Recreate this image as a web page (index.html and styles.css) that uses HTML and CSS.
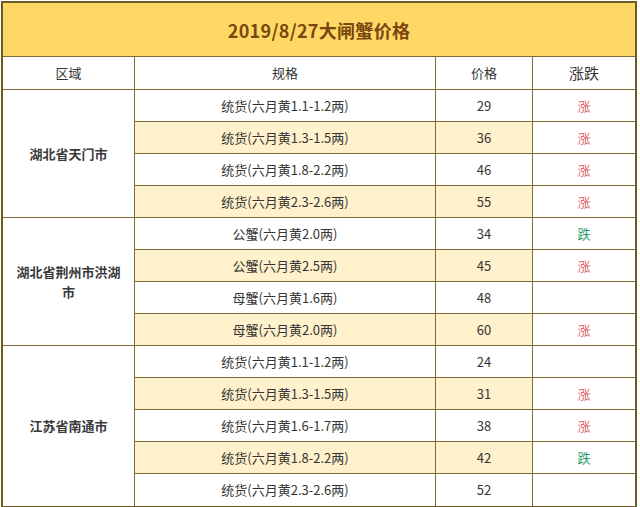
FILE: index.html
```html
<!DOCTYPE html>
<html lang="zh-CN">
<head>
<meta charset="utf-8">
<title>2019/8/27大闸蟹价格</title>
<link rel="stylesheet" href="styles.css">
</head>
<body>
<table class="price-table">
  <colgroup>
    <col class="c-region">
    <col class="c-spec">
    <col class="c-price">
    <col class="c-trend">
  </colgroup>
  <tr class="title-row"><td colspan="4" class="title">2019/8/27大闸蟹价格</td></tr>
  <tr class="head-row">
    <td>区域</td><td>规格</td><td>价格</td><td class="h-trend">涨跌</td>
  </tr>
  <tr>
    <td rowspan="4" class="region">湖北省天门市</td>
    <td class="spec">统货(六月黄1.1-1.2两)</td><td class="price">29</td><td class="trend up">涨</td>
  </tr>
  <tr class="alt"><td class="spec">统货(六月黄1.3-1.5两)</td><td class="price">36</td><td class="trend up">涨</td></tr>
  <tr><td class="spec">统货(六月黄1.8-2.2两)</td><td class="price">46</td><td class="trend up">涨</td></tr>
  <tr class="alt"><td class="spec">统货(六月黄2.3-2.6两)</td><td class="price">55</td><td class="trend up">涨</td></tr>
  <tr>
    <td rowspan="4" class="region">湖北省荆州市洪湖市</td>
    <td class="spec">公蟹(六月黄2.0两)</td><td class="price">34</td><td class="trend down">跌</td>
  </tr>
  <tr class="alt"><td class="spec">公蟹(六月黄2.5两)</td><td class="price">45</td><td class="trend up">涨</td></tr>
  <tr><td class="spec">母蟹(六月黄1.6两)</td><td class="price">48</td><td class="trend"></td></tr>
  <tr class="alt"><td class="spec">母蟹(六月黄2.0两)</td><td class="price">60</td><td class="trend up">涨</td></tr>
  <tr>
    <td rowspan="5" class="region last">江苏省南通市</td>
    <td class="spec">统货(六月黄1.1-1.2两)</td><td class="price">24</td><td class="trend"></td>
  </tr>
  <tr class="alt"><td class="spec">统货(六月黄1.3-1.5两)</td><td class="price">31</td><td class="trend up">涨</td></tr>
  <tr><td class="spec">统货(六月黄1.6-1.7两)</td><td class="price">38</td><td class="trend up">涨</td></tr>
  <tr class="alt"><td class="spec">统货(六月黄1.8-2.2两)</td><td class="price">42</td><td class="trend down">跌</td></tr>
  <tr class="final"><td class="spec">统货(六月黄2.3-2.6两)</td><td class="price">52</td><td class="trend"></td></tr>
</table>
</body>
</html>
```

FILE: styles.css
```css
html, body {
  margin: 0;
  padding: 0;
  background: #ffffff;
}
body {
  font-family: "Noto Sans CJK SC", "Noto Sans", sans-serif;
  color: #353535;
}
.price-table {
  margin: 1px 0 0 1px;
  width: 636px;
  box-sizing: border-box;
  border: 2px solid #6d5c20;
  border-collapse: separate;
  border-spacing: 0;
  table-layout: fixed;
}
.c-region { width: 132px; }
.c-spec { width: 301px; }
.c-price { width: 97px; }
.c-trend { width: 102px; }
.price-table td {
  box-sizing: border-box;
  height: 32px;
  padding: 0;
  border-right: 1px solid #7d6d34;
  border-bottom: 1px solid #7d6d34;
  text-align: center;
  vertical-align: middle;
  font-size: 13px;
  line-height: 18px;
}
.price-table td:last-child { border-right: 0; }
.price-table td.region { border-right: 1px solid #7d6d34; }
.price-table .final td,
.price-table td.last { border-bottom: 0; }
.title-row td.title {
  height: 54px;
  background: #fed865;
  color: #7a4710;
  font-size: 18px;
  font-weight: bold;
  letter-spacing: 0.3px;
}
.head-row td {
  height: 33px;
  color: #333333;
}
.head-row td.h-trend { font-size: 15px; }
.region {
  font-weight: bold;
  color: #3a3a3a;
  padding: 0 12px !important;
  line-height: 20px !important;
}
.alt td.spec, .alt td.price { background: #fef1cb; }
.trend.up { color: #e0605e; }
.trend.down { color: #2f9a67; }
```
